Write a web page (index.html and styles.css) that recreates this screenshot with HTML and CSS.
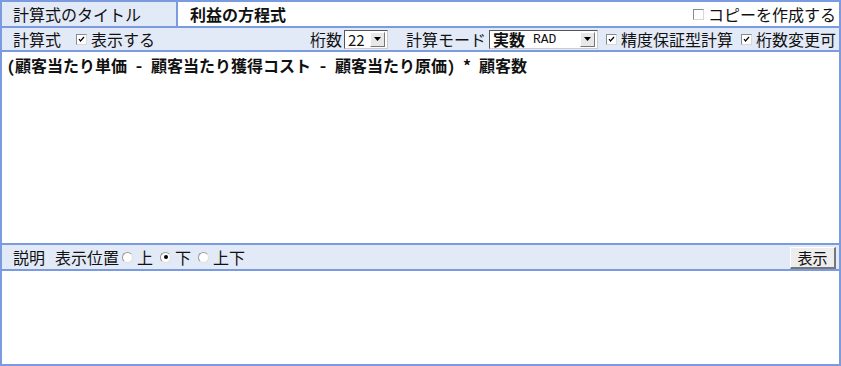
FILE: index.html
```html
<!DOCTYPE html>
<html lang="ja">
<head>
<meta charset="utf-8">
<title>計算式</title>
<link rel="stylesheet" href="styles.css">
</head>
<body>
<div class="frame">
  <div class="row row-title">
    <div class="title-label">計算式のタイトル</div>
    <div class="title-value">
      <span class="title-text">利益の方程式</span>
      <label class="opt"><span class="cb"></span>コピーを作成する</label>
    </div>
  </div>
  <div class="row row-bar">
    <div class="group">
      <span class="lbl">計算式</span>
      <label class="opt first"><span class="cb checked"><svg viewBox="0 0 9 9"><path d="M2 4 L3.5 6 L7 2" fill="none" stroke="#000" stroke-width="1.2"/></svg></span>表示する</label>
    </div>
    <div class="group">
      <span class="lbl">桁数</span>
      <span class="sel sel-digits"><span class="sel-val">22</span><span class="sel-btn"><svg viewBox="0 0 7 4"><path d="M0 0 H7 L3.5 4 Z" fill="#000"/></svg></span></span>
      <span class="lbl mode">計算モード</span>
      <span class="sel sel-mode"><span class="sel-val"><b>実数</b><span class="rad">RAD</span></span><span class="sel-btn"><svg viewBox="0 0 7 4"><path d="M0 0 H7 L3.5 4 Z" fill="#000"/></svg></span></span>
      <label class="opt gap"><span class="cb checked"><svg viewBox="0 0 9 9"><path d="M2 4 L3.5 6 L7 2" fill="none" stroke="#000" stroke-width="1.2"/></svg></span>精度保証型計算</label>
      <label class="opt gap"><span class="cb checked"><svg viewBox="0 0 9 9"><path d="M2 4 L3.5 6 L7 2" fill="none" stroke="#000" stroke-width="1.2"/></svg></span>桁数変更可</label>
    </div>
  </div>
  <div class="formula"><span class="h">(</span>顧客当たり単価<span class="h"> - </span>顧客当たり獲得コスト<span class="h"> - </span>顧客当たり原価<span class="h">) * </span>顧客数</div>
  <div class="row row-bar row-desc">
    <div class="group">
      <span class="lbl">説明</span>
      <span class="lbl pos">表示位置</span>
      <label class="opt r1"><span class="rb"></span>上</label>
      <label class="opt r2"><span class="rb on"></span>下</label>
      <label class="opt r2"><span class="rb"></span>上下</label>
    </div>
    <button class="btn" type="button">表示</button>
  </div>
  <div class="desc"></div>
</div>
</body>
</html>
```

FILE: styles.css
```css
html, body {
  margin: 0;
  padding: 0;
  background: #fff;
}
body {
  font-family: "Noto Sans CJK JP", "Noto Sans", sans-serif;
  font-size: 16px;
  color: #111;
}
.frame {
  width: 841px;
  height: 366px;
  box-sizing: border-box;
  border: 2px solid #7b9be0;
  display: flex;
  flex-direction: column;
}
.row {
  display: flex;
  align-items: center;
  flex: none;
}
.row-title {
  height: 24px;
  border-bottom: 2px solid #7b9be0;
}
.title-label {
  width: 163px;
  height: 100%;
  background: #e3eaf7;
  border-right: 2px solid #7b9be0;
  padding-left: 11px;
  display: flex;
  align-items: center;
  line-height: 1;
}
.title-value {
  flex: 1;
  height: 100%;
  display: flex;
  align-items: center;
  justify-content: space-between;
  padding: 0 3px 0 12px;
  line-height: 1;
}
.title-text {
  font-weight: bold;
}
.row-bar {
  height: 22px;
  background: #e3eaf7;
  border-bottom: 2px solid #7b9be0;
  justify-content: space-between;
  padding: 0 3px 0 11px;
  line-height: 1;
}
.group {
  display: flex;
  align-items: center;
}
.lbl {
  white-space: nowrap;
}
.opt {
  display: flex;
  align-items: center;
  white-space: nowrap;
}
.opt.first {
  margin-left: 15px;
}
.cb {
  width: 9px;
  height: 9px;
  border: 1px solid #8a8a8a;
  border-right-color: #d8d8d8;
  border-bottom-color: #d8d8d8;
  background: #fff;
  margin-right: 4px;
  display: inline-block;
}
.cb svg {
  width: 9px;
  height: 9px;
  display: block;
}
.sel {
  display: flex;
  align-items: center;
  height: 19px;
  box-sizing: border-box;
  border: 1px solid #555;
  border-right-color: #ccc;
  border-bottom-color: #ccc;
  background: #fff;
  margin-left: 2px;
}
.sel-digits {
  width: 44px;
}
.sel-mode {
  width: 109px;
  margin-left: 3px;
}
.sel-val {
  flex: 1;
  padding-left: 3px;
  font-size: 15px;
  display: flex;
  align-items: center;
}
.sel-mode .sel-val b {
  font-size: 16px;
}
.rad {
  font-family: "Liberation Mono", "DejaVu Sans Mono", monospace;
  font-size: 13px;
  margin-left: 8px;
}
.sel-btn {
  width: 13px;
  height: 13px;
  margin-right: 2px;
  background: #e8e8e8;
  border: 1px solid #fff;
  border-right-color: #777;
  border-bottom-color: #777;
  display: flex;
  align-items: center;
  justify-content: center;
}
.sel-btn svg {
  width: 7px;
  height: 4px;
}
.mode {
  margin-left: 18px;
}
.gap {
  margin-left: 8px;
}
.formula {
  height: 193px;
  flex: none;
  border-bottom: 2px solid #7b9be0;
  padding: 3px 5px;
  box-sizing: border-box;
  font-weight: bold;
  font-size: 16px;
  line-height: 20px;
  white-space: pre;
}
.h {
  font-family: "Noto Sans Mono CJK JP", "Liberation Mono", monospace;
}
.row-desc {
  height: 24px;
}
.pos {
  margin-left: 10px;
}
.r1 {
  margin-left: 3px;
}
.r2 {
  margin-left: 7px;
}
.rb {
  width: 9px;
  height: 9px;
  border-radius: 50%;
  border: 1px solid #9a9a9a;
  border-right-color: #e0e0e0;
  border-bottom-color: #e0e0e0;
  background: #fff;
  margin-right: 4px;
  display: inline-block;
  position: relative;
}
.rb.on::after {
  content: "";
  position: absolute;
  left: 2.5px;
  top: 2.5px;
  width: 4px;
  height: 4px;
  border-radius: 50%;
  background: #000;
}
.btn {
  font-family: inherit;
  font-size: 15px;
  height: 22px;
  width: 46px;
  padding: 0;
  background: #ededed;
  border: 1px solid #fff;
  border-right: 2px solid #777;
  border-bottom: 2px solid #777;
  color: #111;
  line-height: 1;
  margin-top: 1px;
}
.desc {
  flex: 1;
}
```
